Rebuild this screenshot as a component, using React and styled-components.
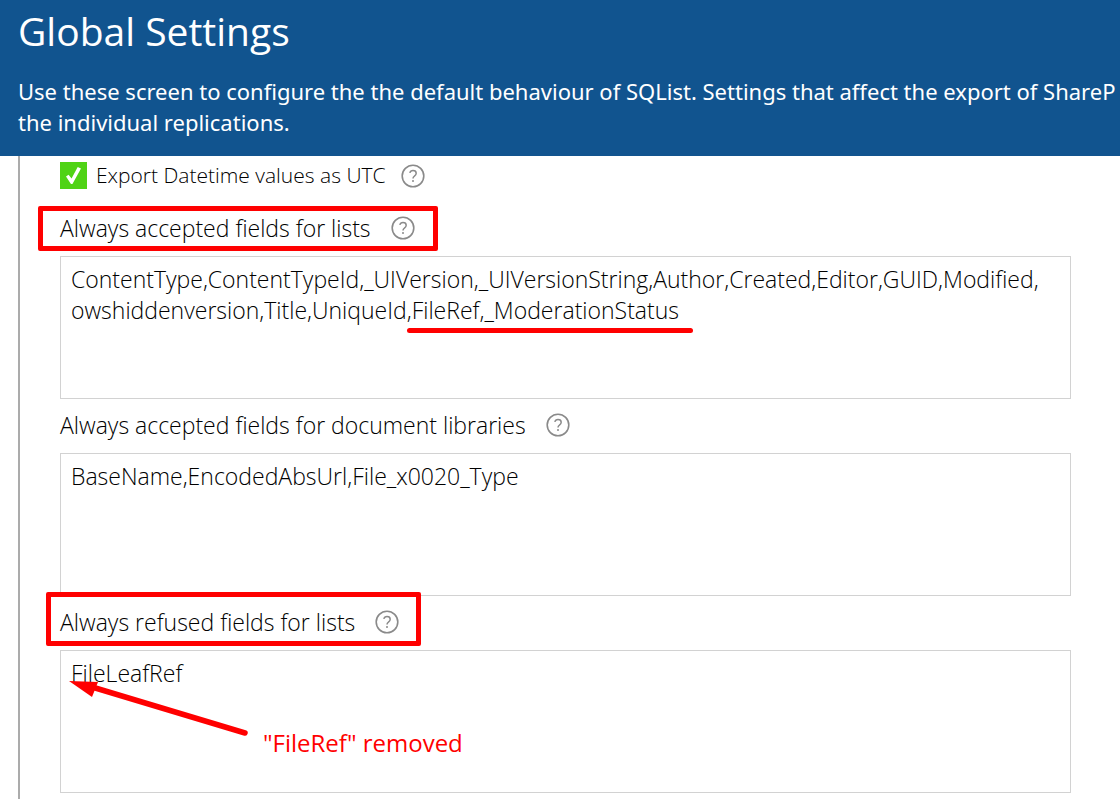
import React, { useState } from "react";
import styled, { createGlobalStyle } from "styled-components";

const GlobalStyle = createGlobalStyle`
  * {
    box-sizing: border-box;
  }

  body {
    margin: 0;
    background: #fff;
    color: #000;
    font-family: "Open Sans", "Noto Sans", sans-serif;
    font-size: 23px;
    line-height: 31px;
  }
`;

const Page = styled.div`
  display: flex;
  flex-direction: column;
  min-height: 100vh;
  overflow: hidden;
`;

const Header = styled.header`
  padding: 3px 0 18px 18px;
  overflow: hidden;
  background: #11548f;
  color: #fff;
`;

const Heading = styled.h1`
  margin: 0 0 17px;
  font-size: 39px;
  font-weight: 400;
  line-height: 56px;
`;

const Intro = styled.p`
  margin: 0;
  font-family: "Noto Sans", sans-serif;
  font-size: 22px;
  white-space: nowrap;
`;

const Form = styled.form`
  flex: 1;
  margin-left: 18px;
  padding: 6px 49px 6px 40px;
  border-left: 2px solid #ababab;
  font-weight: 300;
`;

const CheckRow = styled.div`
  display: flex;
  align-items: center;
  height: 27px;
  margin-bottom: 13px;
  font-size: 21px;
`;

const Checkbox = styled.input`
  appearance: none;
  display: grid;
  place-items: center;
  width: 27px;
  height: 27px;
  margin: 0 9px 0 0;
  background: #4fd315;

  &::before {
    content: "";
    width: 15px;
    height: 17px;
    background: #fff;
    clip-path: polygon(0 56%, 17% 45%, 37% 68%, 78% 0, 100% 9%, 43% 100%, 33% 100%);
    visibility: hidden;
  }

  &:checked::before {
    visibility: visible;
  }
`;

const LabelRow = styled.div`
  position: relative;
  display: flex;
  align-items: center;
  height: 54px;
  padding-bottom: 2px;
`;

const Label = styled.label`
  white-space: nowrap;
`;

const Help = styled.button`
  display: flex;
  margin: 0 0 0 ${({ $gap }) => $gap}px;
  padding: 0;
  border: 0;
  background: none;
  color: #8a8a8a;
`;

const FieldBox = styled.div`
  position: relative;
`;

const Textarea = styled.textarea`
  display: block;
  width: 100%;
  padding: 7px 10px 10px;
  border: 1px solid #d2d2d2;
  border-radius: 0;
  outline: none;
  resize: none;
  overflow: hidden;
  background: #fff;
  color: inherit;
  font: inherit;
`;

const Frame = styled.span`
  position: absolute;
  top: ${({ $top }) => $top}px;
  left: ${({ $left }) => $left}px;
  width: ${({ $width }) => $width}px;
  height: ${({ $height }) => $height}px;
  border: 5px solid #f00;
  border-radius: 2px;
  pointer-events: none;
`;

const Underline = styled.span`
  position: absolute;
  top: 72px;
  left: 347px;
  width: 286px;
  height: 5px;
  border-radius: 3px;
  background: #f00;
`;

const Arrow = styled.svg`
  position: absolute;
  top: 29px;
  left: 8px;
  pointer-events: none;
`;

const Note = styled.span`
  position: absolute;
  top: 77px;
  left: 203px;
  color: #f00;
  font-size: 24px;
  font-weight: 400;
  white-space: nowrap;
`;

const HelpButton = ({ gap = 20 }) => (
  <Help type="button" aria-label="Help" $gap={gap}>
    <svg width="24" height="24" viewBox="0 0 24 24" fill="none" stroke="currentColor">
      <circle cx="12" cy="12" r="10.8" strokeWidth="1.6" />
      <path
        d="M8.8 8.9C9.2 7.4 10.4 6.5 12 6.5c1.9 0 3.2 1 3.2 2.7 0 1.4-.8 2.1-1.8 2.9-1 .7-1.4 1.2-1.4 2.5"
        strokeWidth="1.5"
      />
      <circle cx="12" cy="17" r="1" fill="currentColor" stroke="none" />
    </svg>
  </Help>
);

const Field = ({ name, label, value, handleOnChange, frame, children }) => (
  <div>
    <LabelRow>
      <Label htmlFor={name}>{label}</Label>
      <HelpButton />
      {frame && (
        <Frame
          $top={frame.top}
          $left={frame.left}
          $width={frame.width}
          $height={frame.height}
        />
      )}
    </LabelRow>
    <FieldBox>
      <Textarea
        id={name}
        name={name}
        rows={4}
        spellCheck={false}
        value={value}
        onChange={handleOnChange}
      />
      {children}
    </FieldBox>
  </div>
);

const App = () => {
  const [utc, setUtc] = useState(true);
  const [formState, setFormState] = useState({
    acceptedLists:
      "ContentType,ContentTypeId,_UIVersion,_UIVersionString,Author,Created,Editor,GUID,Modified,\nowshiddenversion,Title,UniqueId,FileRef,_ModerationStatus",
    acceptedLibraries: "BaseName,EncodedAbsUrl,File_x0020_Type",
    refusedLists: "FileLeafRef",
  });

  const handleOnChange = ({ target }) => {
    setFormState({ ...formState, [target.name]: target.value });
  };

  return (
    <Page>
      <GlobalStyle />
      <Header>
        <Heading>Global Settings</Heading>
        <Intro>
          Use these screen to configure the the default behaviour of SQList.
          Settings that affect the export of ShareP
          <br />
          the individual replications.
        </Intro>
      </Header>
      <Form>
        <CheckRow>
          <Checkbox
            id="utc"
            type="checkbox"
            checked={utc}
            onChange={() => setUtc(!utc)}
          />
          <Label htmlFor="utc">Export Datetime values as UTC</Label>
          <HelpButton gap={15} />
        </CheckRow>
        <Field
          name="acceptedLists"
          label="Always accepted fields for lists"
          value={formState.acceptedLists}
          handleOnChange={handleOnChange}
          frame={{ top: 4, left: -22, width: 400, height: 45 }}
        >
          <Underline />
        </Field>
        <Field
          name="acceptedLibraries"
          label="Always accepted fields for document libraries"
          value={formState.acceptedLibraries}
          handleOnChange={handleOnChange}
        />
        <Field
          name="refusedLists"
          label="Always refused fields for lists"
          value={formState.refusedLists}
          handleOnChange={handleOnChange}
          frame={{ top: -4, left: -14, width: 375, height: 54 }}
        >
          <Arrow width="182" height="60" viewBox="0 0 182 60">
            <path d="M24 8L177 54" stroke="#f00" strokeWidth="5.5" strokeLinecap="round" />
            <path d="M1 2L30 3L24 18Z" fill="#f00" />
          </Arrow>
          <Note>"FileRef" removed</Note>
        </Field>
      </Form>
    </Page>
  );
};

export default App;
